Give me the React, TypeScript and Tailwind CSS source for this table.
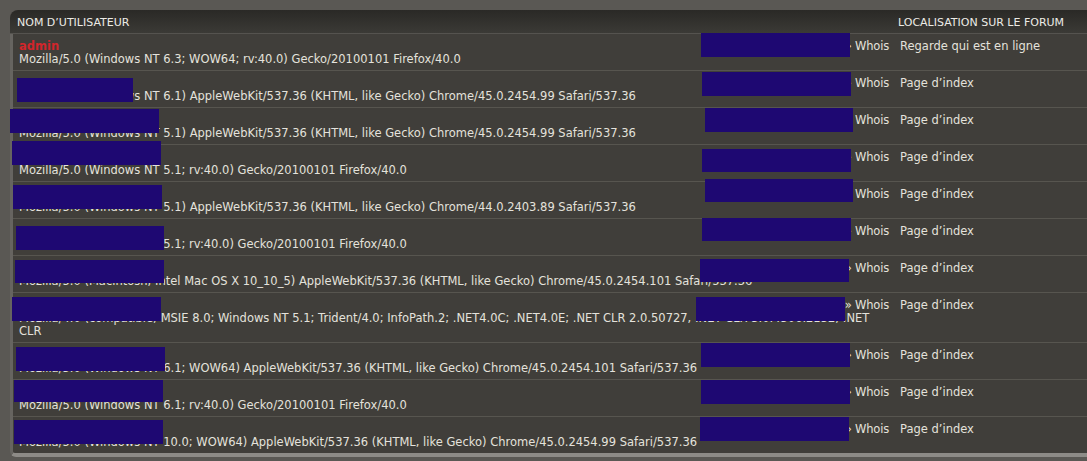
import React from 'react';

type Row = {
  name?: string;
  ua: React.ReactNode;
  where: string;
};

const rows: Row[] = [
  { name: 'admin', ua: 'Mozilla/5.0 (Windows NT 6.3; WOW64; rv:40.0) Gecko/20100101 Firefox/40.0', where: 'Regarde qui est en ligne' },
  { ua: 'Mozilla/5.0 (Windows NT 6.1) AppleWebKit/537.36 (KHTML, like Gecko) Chrome/45.0.2454.99 Safari/537.36', where: 'Page d’index' },
  { ua: 'Mozilla/5.0 (Windows NT 5.1) AppleWebKit/537.36 (KHTML, like Gecko) Chrome/45.0.2454.99 Safari/537.36', where: 'Page d’index' },
  { ua: 'Mozilla/5.0 (Windows NT 5.1; rv:40.0) Gecko/20100101 Firefox/40.0', where: 'Page d’index' },
  { ua: 'Mozilla/5.0 (Windows NT 5.1) AppleWebKit/537.36 (KHTML, like Gecko) Chrome/44.0.2403.89 Safari/537.36', where: 'Page d’index' },
  { ua: 'Mozilla/5.0 (Windows NT 5.1; rv:40.0) Gecko/20100101 Firefox/40.0', where: 'Page d’index' },
  { ua: 'Mozilla/5.0 (Macintosh; Intel Mac OS X 10_10_5) AppleWebKit/537.36 (KHTML, like Gecko) Chrome/45.0.2454.101 Safari/537.36', where: 'Page d’index' },
  {
    ua: (
      <>
        Mozilla/4.0 (compatible; MSIE 8.0; Windows NT 5.1; Trident/4.0; InfoPath.2; .NET4.0C; .NET4.0E; .NET CLR 2.0.50727, .NET CLR 3.0.4506.2152; .NET
        <br />
        CLR
      </>
    ),
    where: 'Page d’index',
  },
  { ua: 'Mozilla/5.0 (Windows NT 6.1; WOW64) AppleWebKit/537.36 (KHTML, like Gecko) Chrome/45.0.2454.101 Safari/537.36', where: 'Page d’index' },
  { ua: 'Mozilla/5.0 (Windows NT 6.1; rv:40.0) Gecko/20100101 Firefox/40.0', where: 'Page d’index' },
  { ua: 'Mozilla/5.0 (Windows NT 10.0; WOW64) AppleWebKit/537.36 (KHTML, like Gecko) Chrome/45.0.2454.99 Safari/537.36', where: 'Page d’index' },
];

// redaction boxes, page coordinates [x, y, w, h]
const boxes: [number, number, number, number][] = [
  [701, 33, 149, 24],
  [17, 78, 116, 24],
  [702, 72, 149, 24],
  [10, 109, 149, 24],
  [705, 108, 148, 24],
  [12, 141, 149, 24],
  [702, 149, 149, 23],
  [13, 185, 149, 24],
  [705, 179, 148, 23],
  [16, 226, 148, 24],
  [702, 218, 149, 23],
  [15, 260, 149, 23],
  [700, 259, 149, 23],
  [12, 297, 149, 24],
  [696, 297, 149, 24],
  [16, 347, 149, 24],
  [701, 343, 149, 24],
  [14, 380, 149, 22],
  [701, 380, 149, 24],
  [14, 420, 149, 24],
  [700, 417, 149, 24],
];

export default function App() {
  return (
    <div
      className="relative h-[461px] w-[1087px] overflow-hidden bg-[#5a5854] pl-[10px] pt-[10px] text-[11.5px] text-[#e4e2dc]"
      style={{ fontFamily: '"DejaVu Sans", Verdana, sans-serif' }}
    >
      <div className="w-[1090px]">
        <div className="flex h-[24px] items-center rounded-tl-[8px] border-b border-[#55534f] bg-gradient-to-b from-[#2a2926] to-[#3b3a36] pt-[3px] text-[11px] uppercase text-[#ecebe6]">
          <div className="flex-1 pl-[7px]">Nom d’utilisateur</div>
          <div className="w-[202px]">Localisation sur le forum</div>
        </div>
        <div className="rounded-bl-[6px] border-b-[4px] border-l-[3px] border-b-[#8d8b87] border-l-[#666460] bg-[#403e3a]">
          {rows.map((r, i) => (
            <div key={i} className="flex border-b border-[#57554f] leading-[13px] last:border-b-0">
              <div className="flex-1 pb-[4px] pl-[6px] pr-[4px] pt-[6px]">
                <div className="flex justify-between">
                  {r.name ? (
                    <span className="font-bold text-[#d2262b]">{r.name}</span>
                  ) : (
                    <span className="text-transparent">membre</span>
                  )}
                  <span className="tracking-[-0.2px]">
                    <span className="text-transparent">000.000.000.00 </span>» Whois
                  </span>
                </div>
                <div>{r.ua}</div>
              </div>
              <div className="w-[207px] pb-[4px] pl-[7px] pt-[6px]">{r.where}</div>
            </div>
          ))}
        </div>
      </div>
      {boxes.map(([x, y, w, h], i) => (
        <div key={i} className="absolute bg-[#1e0872]" style={{ left: x, top: y, width: w, height: h }} />
      ))}
    </div>
  );
}
